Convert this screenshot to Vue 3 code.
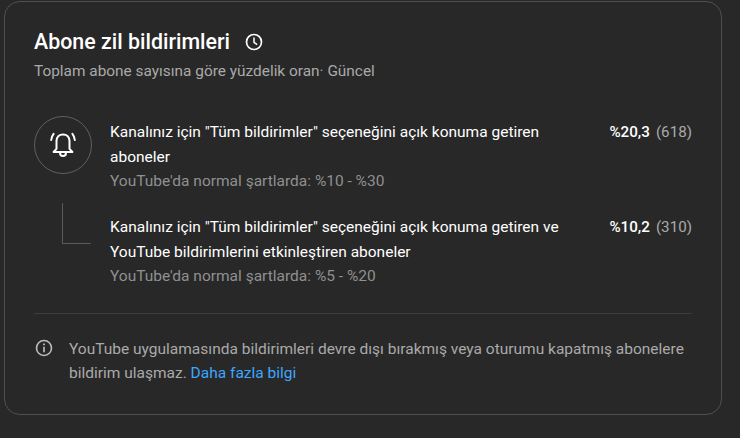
<template>
  <div class="page">
    <section class="card">
      <div class="title-row">
        <h2>Abone zil bildirimleri</h2>
        <svg class="clock" viewBox="0 0 24 24" width="20" height="20" fill="none" stroke="#fff">
          <circle cx="12" cy="12" r="9" stroke-width="2" />
          <path d="M12 6.5V12.4L15.8 15.2" stroke-width="1.8" />
        </svg>
      </div>
      <p class="subtitle">Toplam abone sayısına göre yüzdelik oran· Güncel</p>

      <div class="rows">
        <div class="row">
          <div class="lead">
            <div class="bell-circle">
              <svg viewBox="0 0 28 28" width="28" height="28" fill="none" stroke="#fff" stroke-width="2" stroke-linejoin="round" stroke-linecap="round">
                <path d="M7.5 17.8V10C7.5 6 10.2 3.4 14 3.4C17.8 3.4 20.5 6 20.5 10V17.8L23.4 21H4.6L7.5 17.8Z" />
                <path d="M11 21.4C11 23.8 12.3 25 14 25C15.7 25 17 23.8 17 21.4" />
                <path d="M2.2 9C2.4 6.6 3.2 4.6 4.6 2.8" />
                <path d="M25.8 9C25.6 6.6 24.8 4.6 23.4 2.8" />
              </svg>
            </div>
          </div>
          <div class="body">
            <div class="main">Kanalınız için "Tüm bildirimler" seçeneğini açık konuma getiren aboneler</div>
            <div class="hint">YouTube'da normal şartlarda: %10 - %30</div>
          </div>
          <div class="stat"><strong>%20,3</strong><span>(618)</span></div>
        </div>

        <div class="row">
          <div class="lead">
            <div class="connector"></div>
          </div>
          <div class="body">
            <div class="main">Kanalınız için "Tüm bildirimler" seçeneğini açık konuma getiren ve YouTube bildirimlerini etkinleştiren aboneler</div>
            <div class="hint">YouTube'da normal şartlarda: %5 - %20</div>
          </div>
          <div class="stat"><strong>%10,2</strong><span>(310)</span></div>
        </div>
      </div>

      <div class="note">
        <svg class="info" viewBox="0 0 24 24" width="20" height="20" fill="none" stroke="#bdbdbd">
          <circle cx="12" cy="12" r="9" stroke-width="1.9" />
          <path d="M12 10.4V17" stroke-width="2" />
          <path d="M12 6.6V8.8" stroke-width="2.2" />
        </svg>
        <p>YouTube uygulamasında bildirimleri devre dışı bırakmış veya oturumu kapatmış abonelere bildirim ulaşmaz. <a>Daha fazla bilgi</a></p>
      </div>
    </section>
  </div>
</template>

<script setup>
</script>

<style>
html,
body {
  margin: 0;
  background: #282828;
}
</style>

<style scoped>
.page {
  width: 740px;
  height: 438px;
  padding: 1px 18px 0 4px;
  box-sizing: border-box;
  background: #282828;
  font-family: Roboto, "Noto Sans", sans-serif;
  overflow: hidden;
}

.card {
  height: 414px;
  box-sizing: border-box;
  padding: 25px 29px 0 29px;
  border: 1px solid #4f4f4f;
  border-radius: 16px;
}

.title-row {
  display: flex;
  align-items: center;
  gap: 14px;
  height: 28px;
}

h2 {
  margin: 0;
  font-size: 21.4px;
  font-weight: 500;
  color: #fff;
}

.clock {
  margin-top: 2px;
}

.subtitle {
  margin: 4px 0 0;
  font-size: 15.4px;
  line-height: 24px;
  color: #aaa;
}

.rows {
  margin-top: 33px;
  display: flex;
  flex-direction: column;
  gap: 18px;
}

.row {
  display: flex;
}

.lead {
  width: 76px;
  flex-shrink: 0;
}

.bell-circle {
  width: 56px;
  height: 56px;
  border: 1px solid #606060;
  border-radius: 50%;
  display: flex;
  align-items: center;
  justify-content: center;
}

.connector {
  width: 28px;
  height: 40px;
  margin: -8px 0 0 28px;
  border-left: 1px solid #5a5a5a;
  border-bottom: 1px solid #5a5a5a;
}

.body {
  flex: 1;
  padding: 4px 30px 0 0;
}

.main {
  font-size: 15.5px;
  line-height: 24.5px;
  color: #fff;
}

.hint {
  font-size: 15.5px;
  line-height: 24px;
  color: #909090;
}

.stat {
  flex-shrink: 0;
  padding-top: 4px;
  font-size: 15.2px;
  line-height: 24.5px;
  display: flex;
  gap: 6px;
  white-space: nowrap;
}

.stat strong {
  font-weight: 500;
  color: #fff;
}

.stat span {
  color: #aaa;
}

.note {
  margin-top: 25px;
  padding-top: 23px;
  border-top: 1px solid #3d3d3d;
  display: flex;
  gap: 15px;
}

.info {
  flex-shrink: 0;
  margin-top: 1px;
}

.note p {
  margin: 0;
  font-size: 15.5px;
  line-height: 24px;
  color: #aaa;
}

.note a {
  color: #3ea6ff;
}
</style>
